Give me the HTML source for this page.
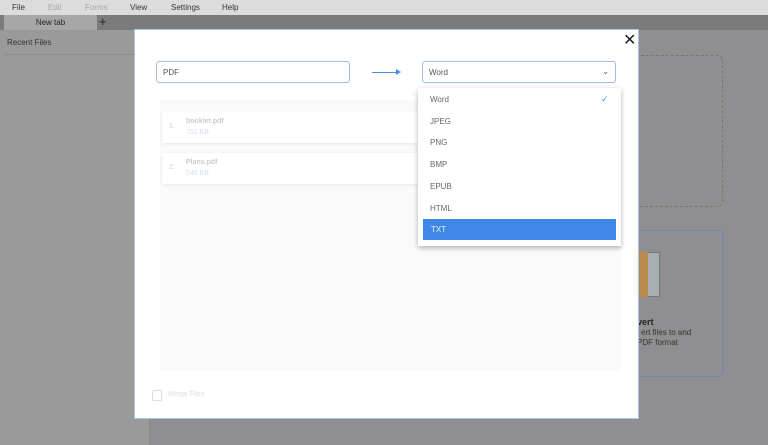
<!DOCTYPE html>
<html><head><style>
*{margin:0;padding:0;box-sizing:border-box}
body{width:768px;height:445px;overflow:hidden;position:relative;font-family:"Liberation Sans","DejaVu Sans",sans-serif;background:#8f8f91}
.a{position:absolute}
.menu{left:0;top:0;width:768px;height:15px;background:#dcdcdc;font-size:8px;color:#333}
.menu span{position:absolute;top:3px}
.tabs{left:0;top:15px;width:768px;height:15px;background:#7b7b7b}
.sb{left:0;top:30px;width:150px;height:415px;background:#9a9a9b;border-right:1px solid #858585}
.m{left:134px;top:29px;width:505px;height:390px;background:#fff;border:1px solid #a9c6e6}
.in{border:1px solid #9bbde6;border-radius:3px;background:#fff;font-size:8px;color:#555;padding:6px 6px}
.dd{left:418px;top:88px;width:203px;height:158px;background:#fff;box-shadow:0 2px 5px rgba(0,0,0,.3)}
.dd div{position:absolute;left:12px;font-size:8px;color:#666}
.card{background:#fff;box-shadow:0 1px 3px rgba(0,0,0,.08);font-size:7px;color:#ccc}
</style></head><body>
<div class="a menu"><span style="left:12px">File</span><span style="left:48px;color:#aaa">Edit</span><span style="left:85px;color:#aaa">Forms</span><span style="left:130px">View</span><span style="left:171px">Settings</span><span style="left:222px">Help</span></div>
<div class="a tabs"></div>
<div class="a" style="left:4px;top:15px;width:93px;height:15px;background:#a7a7a7;font-size:8px;color:#222;text-align:center;line-height:16px">New tab</div>
<div class="a" style="left:99px;top:14px;font-size:13px;color:#222">+</div>
<div class="a sb"><div class="a" style="left:7px;top:8px;font-size:8px;color:#333">Recent Files</div><div class="a" style="left:4px;top:24px;width:144px;height:1px;background:#8e8e8e"></div></div>
<div class="a" style="left:600px;top:55px;width:123px;height:152px;border:1px dashed #777;border-radius:6px"></div>
<div class="a" style="left:600px;top:230px;width:124px;height:147px;border:1px solid #6e89b7;border-radius:6px"></div>
<div class="a" style="left:638px;top:252px;width:22px;height:45px;background:#a9adb4;border:1px solid #777"></div>
<div class="a" style="left:638px;top:252px;width:10px;height:45px;background:#b98a4a"></div>
<div class="a" style="left:637px;top:317px;font-size:9px;font-weight:bold;color:#222">vert</div>
<div class="a" style="left:641px;top:328px;font-size:8px;color:#333;line-height:10px">ert files to and<br><span style="margin-left:-4px">PDF format</span></div>
<div class="a m">
<div class="a" style="left:488px;top:0px;font-size:16px;color:#222">✕</div>
<div class="a in" style="left:21px;top:31px;width:194px;height:22px">PDF</div>
<div class="a" style="left:237px;top:42px;width:26px;height:1px;background:#4a8fe0"></div>
<div class="a" style="left:261px;top:39px;width:0;height:0;border-left:5px solid #4a8fe0;border-top:3px solid transparent;border-bottom:3px solid transparent"></div>
<div class="a in" style="left:287px;top:31px;width:194px;height:22px">Word<span style="position:absolute;right:6px;top:5px;font-size:8px">⌄</span></div>
<div class="a" style="left:25px;top:70px;width:461px;height:271px;background:#fafafb"></div>
<div class="a card" style="left:27px;top:82px;width:260px;height:31px"><span class="a" style="left:7px;top:11px">1.</span><span class="a" style="left:24px;top:6px;font-weight:bold">booklet.pdf</span><span class="a" style="left:24px;top:17px;color:#d4dcf0">751 KB</span></div>
<div class="a card" style="left:27px;top:123px;width:260px;height:31px"><span class="a" style="left:7px;top:11px">2.</span><span class="a" style="left:24px;top:6px;font-weight:bold">Plans.pdf</span><span class="a" style="left:24px;top:17px;color:#d4dcf0">546 KB</span></div>
<div class="a" style="left:17px;top:360px;width:10px;height:11px;border:1px solid #ddd;border-radius:2px"></div>
<div class="a" style="left:33px;top:361px;font-size:7px;color:#ddd">Merge Files</div>
</div>
<div class="a dd">
<div style="top:7px">Word</div><div style="top:29px">JPEG</div><div style="top:50px">PNG</div><div style="top:72px">BMP</div><div style="top:94px">EPUB</div><div style="top:116px">HTML</div>
<div style="left:183px;top:6px;color:#4a8fe0;font-size:9px">✓</div>
<div style="left:5px;top:131px;width:193px;height:21px;background:#3f88e8;color:#e6efff;padding:6px 8px">TXT</div>
</div>
</body></html>
